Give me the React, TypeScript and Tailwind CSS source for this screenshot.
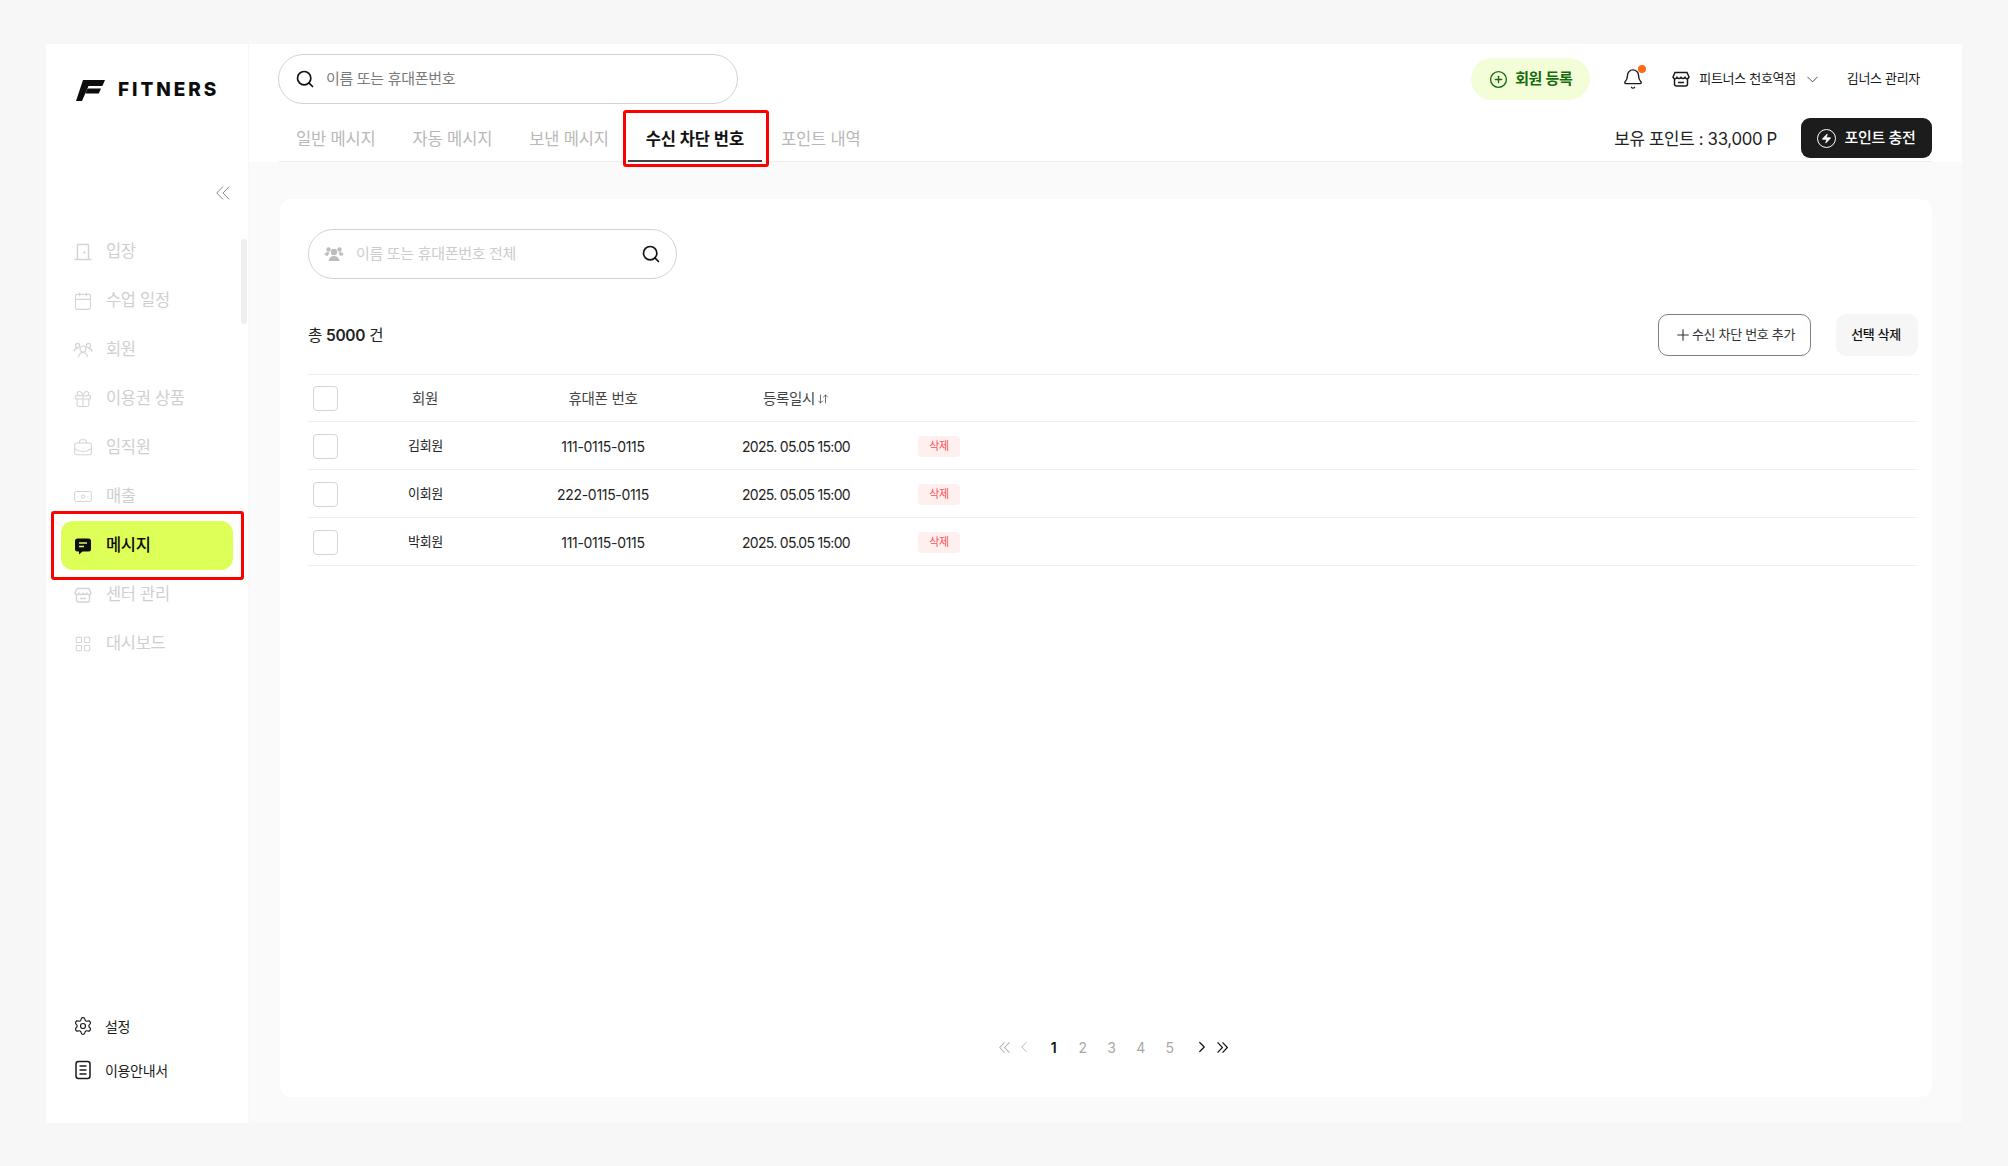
import { ArrowDownUp, Banknote, Bell, BriefcaseBusiness, Calendar, ChevronDown, ChevronLeft, ChevronRight, CirclePlus, Gift, LayoutGrid, Plus, Search, Settings, Zap } from "lucide-react";
import type { ReactNode } from "react";

const Door = () => (
  <svg width="20" height="20" viewBox="0 0 20 20" fill="none" stroke="currentColor" strokeWidth="1.4">
    <path d="M4.500 17.500V2.500h11v15M1.500 17.500h17" />
    <circle cx="11.500" cy="10.500" r="0.500" fill="currentColor" />
  </svg>
);

const People = () => (
  <svg width="20" height="20" viewBox="0 0 20 20" fill="none" stroke="currentColor" strokeWidth="1.200">
    <circle cx="10" cy="9" r="3" />
    <path d="M5.500 17c.6-3 2.300-4.500 4.500-4.500s3.900 1.500 4.500 4.500" />
    <circle cx="4.500" cy="5.500" r="2.100" />
    <circle cx="15.500" cy="5.500" r="2.100" />
    <path d="M0.800 11.500c.5-2 1.900-3.200 3.700-3.200M19.200 11.500c-.5-2-1.900-3.200-3.700-3.200" />
  </svg>
);

const StoreIcon = ({ size = 20, sw = 1.4 }: { size?: number; sw?: number }) => (
  <svg width={size} height={size} viewBox="0 0 20 20" fill="none" stroke="currentColor" strokeWidth={sw}>
    <path d="M4 3.500h12L18 8a2.100 2.100 0 0 1-4 .4 2.300 2.300 0 0 1-4 0 2.300 2.300 0 0 1-4 0A2.100 2.100 0 0 1 2 8z" />
    <path d="M3.500 10v5a2 2 0 0 0 2 2h9a2 2 0 0 0 2-2v-5M7 13.500h6" />
  </svg>
);

const Chat = () => (
  <svg width="20" height="20" viewBox="0 0 20 20">
    <path d="M4.500 2.500h11A2.500 2.500 0 0 1 18 5v8a2.500 2.500 0 0 1-2.500 2.500H9.500L6 18.500v-3H4.500A2.500 2.500 0 0 1 2 13V5a2.500 2.500 0 0 1 2.500-2.500z" fill="#0d0d0d" />
    <path d="M6 7h8M6 10.500h5" stroke="#deff58" strokeWidth="1.600" />
  </svg>
);

const Doc = () => (
  <svg width="20" height="20" viewBox="0 0 20 20" fill="none" stroke="#1a1a1a" strokeWidth="1.500">
    <rect x="3" y="1.500" width="14" height="17" rx="2.500" />
    <path d="M6.500 6h7M6.500 10h7M6.500 14h7" />
  </svg>
);

const Logo = () => (
  <svg width="29" height="21" viewBox="0 0 29 21">
    <path d="M7 0h22l-2.600 6H12.500L6 21H0z" fill="#0d0d0d" />
    <path d="M11.500 8.500H25l-2.200 5H9.400z" fill="#0d0d0d" />
  </svg>
);

const DoubleLeft = ({ size, sw, flip }: { size: number; sw: number; flip?: boolean }) => (
  <svg width={size} height={size} viewBox="0 0 14 14" fill="none" stroke="currentColor" strokeWidth={sw} className={flip ? "rotate-180" : ""}>
    <path d="M7 0.500L0.800 7L7 13.500M13.300 0.500L7.100 7L13.300 13.500" />
  </svg>
);

const navItems: { label: string; icon: ReactNode; active?: boolean }[] = [
  { label: "입장", icon: <Door /> },
  { label: "수업 일정", icon: <Calendar size={20} strokeWidth={1.3} /> },
  { label: "회원", icon: <People /> },
  { label: "이용권 상품", icon: <Gift size={20} strokeWidth={1.3} /> },
  { label: "임직원", icon: <BriefcaseBusiness size={20} strokeWidth={1.3} /> },
  { label: "매출", icon: <Banknote size={23} strokeWidth={1.2} /> },
  { label: "메시지", icon: <Chat />, active: true },
  { label: "센터 관리", icon: <StoreIcon /> },
  { label: "대시보드", icon: <LayoutGrid size={18} strokeWidth={1.4} /> },
];

const tabs = ["일반 메시지", "자동 메시지", "보낸 메시지", "수신 차단 번호", "포인트 내역"];

const rows = [
  ["김회원", "111-0115-0115"],
  ["이회원", "222-0115-0115"],
  ["박회원", "111-0115-0115"],
];

const Check = () => <div className="ml-[5px] h-[25px] w-[25px] rounded-[4px] border border-[#d4d4d4] bg-white" />;

export default function App() {
  return (
    <div
      className="flex h-[1166px] w-[2008px] bg-[#f7f7f7] px-[46px] pb-[43px] pt-[44px] tracking-[-0.02em] text-[#1a1a1a]"
      style={{ fontFamily: '"Inter","Noto Sans CJK KR",sans-serif' }}
    >
      <aside className="relative flex w-[202px] shrink-0 flex-col bg-white">
        <div className="flex h-[92px] items-center gap-[13px] pl-[30px]">
          <Logo />
          <span className="text-[19px] font-extrabold tracking-[0.155em] text-[#0d0d0d]">FITNERS</span>
        </div>
        <div className="mt-[50px] flex justify-end pr-[18px] text-[#8a8a8a]">
          <DoubleLeft size={14} sw={1} />
        </div>
        <div className="absolute left-[195px] top-[195px] h-[85px] w-[6px] rounded-full bg-[#efefef]" />
        <nav className="mt-[27px] flex flex-col">
          {navItems.map((item) =>
            item.active ? (
              <div key={item.label} className="relative mx-[15px] flex h-[49px] items-center gap-[13px] rounded-[12px] bg-[#deff58] pl-[12px] text-[16.500px] font-medium text-[#0d0d0d]">
                <span className="flex w-[20px] justify-center">{item.icon}</span>
                {item.label}
                <div className="absolute -bottom-[10px] -left-[10px] -right-[11px] -top-[10px] rounded-[3px] border-[3px] border-[#ff0000]" />
              </div>
            ) : (
              <div key={item.label} className="mx-[15px] flex h-[49px] items-center gap-[13px] pl-[12px] text-[16.500px] text-[#cfcfcf]">
                <span className="flex w-[20px] justify-center text-[#d4d4d4]">{item.icon}</span>
                {item.label}
              </div>
            ),
          )}
        </nav>
        <div className="mb-[43px] mt-auto flex flex-col gap-[24px] pl-[27px] text-[14px] text-[#1a1a1a]">
          <div className="flex h-[20px] items-center gap-[12px]">
            <Settings size={20} strokeWidth={1.4} />
            설정
          </div>
          <div className="flex h-[20px] items-center gap-[12px]">
            <Doc />
            이용안내서
          </div>
        </div>
      </aside>

      <main className="flex min-w-0 flex-1 flex-col border-l border-[#f7f7f7] bg-[#fafafa]">
        <header className="h-[118px] shrink-0 bg-white">
          <div className="flex h-[70px] items-center pl-[29px] pr-[42px]">
            <div className="flex h-[50px] w-[460px] items-center gap-[11px] rounded-full border border-[#d2d2d2] pl-[16px] text-[15px] text-[#7a7a7a]">
              <Search size={20} strokeWidth={2} className="text-[#111111]" />
              이름 또는 휴대폰번호
            </div>
            <div className="ml-auto flex h-[42px] w-[119px] items-center justify-center gap-[7px] rounded-full bg-[#f3fdd8] text-[15px] font-semibold text-[#136b0b]">
              <CirclePlus size={19} strokeWidth={1.7} />
              회원 등록
            </div>
            <div className="relative ml-[32px] text-[#1a1a1a]">
              <Bell size={22} strokeWidth={1.5} />
              <div className="absolute -right-[2px] -top-[3px] h-[8px] w-[8px] rounded-full bg-[#ff6a13]" />
            </div>
            <span className="ml-[27px]">
              <StoreIcon size={20} sw={1.500} />
            </span>
            <span className="ml-[8px] text-[13px]">피트너스 천호역점</span>
            <ChevronDown size={19} strokeWidth={1.2} className="ml-[7px] text-[#444444]" />
            <span className="ml-[25px] text-[13px]">김너스 관리자</span>
          </div>
          <div className="ml-[30px] mr-[30px] flex h-[48px] items-center border-b border-[#eeeeee]">
            <div className="flex h-[47px] items-end gap-[37px] pl-[17px] tracking-[-0.01em]">
              {tabs.map((tab, i) =>
                i === 3 ? (
                  <div key={tab} className="relative flex h-[43px] items-center text-[16.500px] font-semibold text-[#111111]">
                    {tab}
                    <div className="absolute -bottom-[1px] -left-[18px] -right-[18px] h-[2px] bg-[#444444]" />
                    <div className="absolute -bottom-[6px] -left-[23px] -right-[25px] -top-[8px] rounded-[3px] border-[3px] border-[#ff0000]" />
                  </div>
                ) : (
                  <div key={tab} className="flex h-[43px] items-center text-[16.500px] text-[#b8b8b8]">
                    {tab}
                  </div>
                ),
              )}
            </div>
            <span className="ml-auto mt-[4px] text-[16.800px] text-[#222222]">보유 포인트 : 33,000 P</span>
            <div className="mb-[3px] ml-[24px] flex h-[40px] w-[131px] items-center justify-center gap-[8px] self-end rounded-[9px] bg-[#1c1c1c] text-[15px] font-medium text-white">
              <span className="flex h-[19px] w-[19px] items-center justify-center rounded-full border-[1.500px] border-white">
                <Zap size={11} fill="white" strokeWidth={1} />
              </span>
              포인트 충전
            </div>
          </div>
        </header>

        <section className="mb-[26px] ml-[31px] mr-[30px] mt-[37px] flex flex-1 flex-col rounded-[12px] bg-white pb-[38px] pl-[28px] pr-[14px] pt-[30px]">
          <div className="flex h-[50px] w-[369px] items-center rounded-full border border-[#d2d2d2] px-[15px] text-[15px] text-[#cccccc]">
            <svg width="20" height="16" viewBox="0 0 20 16" fill="#bdbdbd" className="mr-[12px]">
              <circle cx="10" cy="6" r="3.200" />
              <path d="M4.500 15c.5-3.500 2.700-5 5.500-5s5 1.500 5.500 5z" />
              <circle cx="4.500" cy="3.500" r="2.200" />
              <circle cx="15.500" cy="3.500" r="2.200" />
              <path d="M0.500 9c.3-2 1.800-3 3.500-3l1.500 1-2 3zM19.500 9c-.3-2-1.800-3-3.500-3l-1.500 1 2 3z" />
            </svg>
            이름 또는 휴대폰번호 전체
            <Search size={20} strokeWidth={2} className="ml-auto text-[#111111]" />
          </div>

          <div className="mt-[35px] flex h-[42px] items-center">
            <span className="pt-[1px] text-[15.500px] text-[#222222]">
              총 <b className="font-semibold">5000</b> 건
            </span>
            <div className="ml-auto flex h-[42px] w-[153px] items-center justify-center rounded-[10px] border border-[#7f7f7f] text-[13px] text-[#333333]">
              <Plus size={18} strokeWidth={1.500} />
              수신 차단 번호 추가
            </div>
            <div className="ml-[25px] flex h-[42px] w-[82px] items-center justify-center rounded-[10px] bg-[#f6f6f6] pr-[2px] text-[13px] font-medium text-[#111111]">
              선택 삭제
            </div>
          </div>

          <div className="mt-[18px] border-t border-[#efefef]">
            <div className="grid h-[47px] grid-cols-[46px_142px_214px_172px_1fr] items-center border-b border-[#efefef] pt-[1px] text-center text-[14.500px] text-[#444444]">
              <Check />
              <span>회원</span>
              <span>휴대폰 번호</span>
              <span className="flex items-center justify-center">
                등록일시
                <ArrowDownUp size={12} strokeWidth={1.500} className="ml-[2px]" />
              </span>
              <span />
            </div>
            {rows.map(([name, phone]) => (
              <div key={name + phone} className="grid h-[48px] grid-cols-[46px_142px_214px_172px_1fr] items-center border-b border-[#efefef] pt-[1px] text-center text-[14px] text-[#222222]">
                <Check />
                <span className="pl-[1px] text-[13px]">{name}</span>
                <span>{phone}</span>
                <span className="tracking-[-0.05em]">2025. 05.05 15:00</span>
                <span className="ml-[36px] flex h-[21px] w-[42px] items-center justify-center rounded-[4px] bg-[#fff0f0] text-[11px] text-[#ff4d4f]">삭제</span>
              </div>
            ))}
          </div>

          <div className="mt-auto flex h-[24px] items-center justify-center text-[14px] text-[#a8a8a8]">
            <span className="flex w-[19px] justify-center text-[#b0b0b0]">
              <DoubleLeft size={11} sw={1.300} />
            </span>
            <ChevronLeft size={18} strokeWidth={1.200} className="ml-[1px] text-[#b0b0b0]" />
            <span className="ml-[15px] w-[12px] text-center font-semibold text-[#111111]">1</span>
            <span className="ml-[17px] w-[12px] text-center">2</span>
            <span className="ml-[17px] w-[12px] text-center">3</span>
            <span className="ml-[17px] w-[12px] text-center">4</span>
            <span className="ml-[17px] w-[12px] text-center">5</span>
            <ChevronRight size={18} strokeWidth={1.600} className="ml-[17px] text-[#111111]" />
            <span className="ml-[2px] flex w-[19px] justify-center text-[#111111]">
              <DoubleLeft size={11} sw={1.500} flip />
            </span>
          </div>
        </section>
      </main>
    </div>
  );
}
